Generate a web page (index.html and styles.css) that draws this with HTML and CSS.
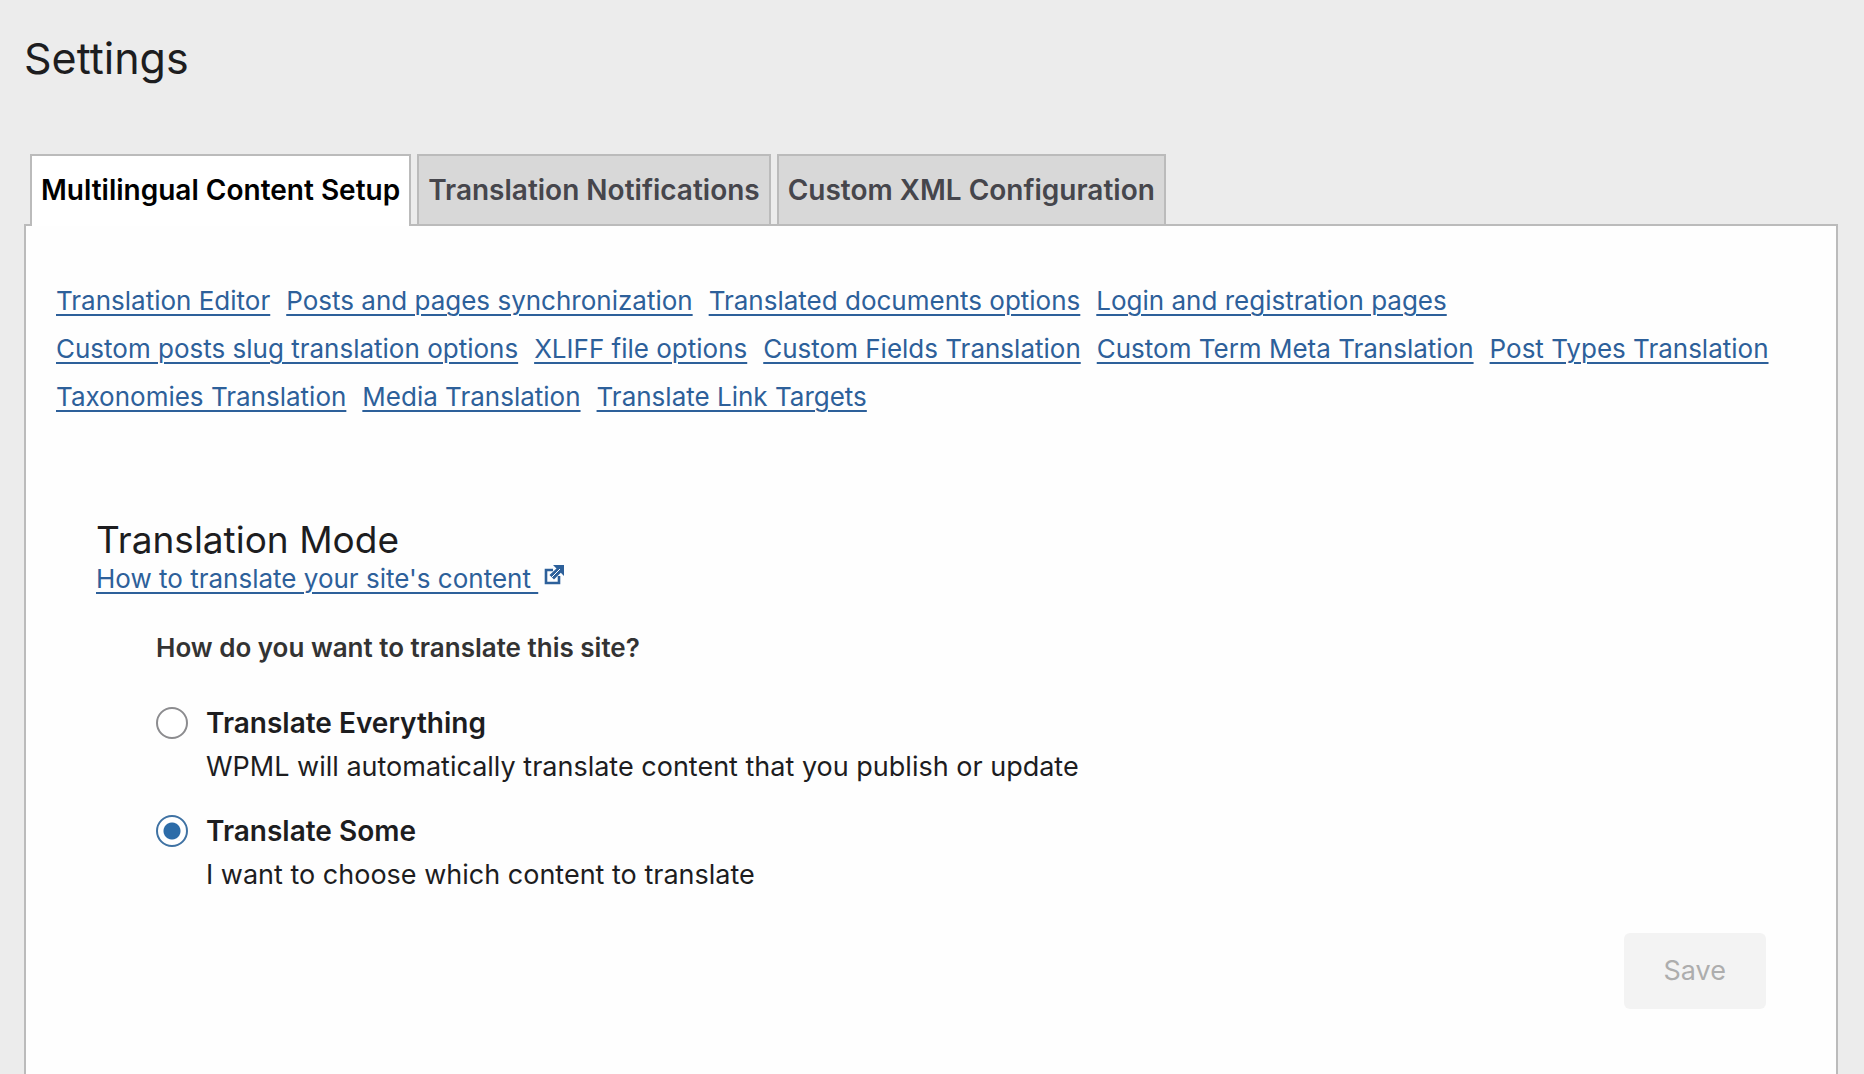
FILE: index.html
```html
<!DOCTYPE html>
<html lang="en">
<head>
    <meta charset="UTF-8">
    <meta name="viewport" content="width=device-width, initial-scale=1.0">
    <title>Settings</title>
    <link rel="stylesheet" href="styles.css">
</head>
<body>
    <h1>Settings</h1>

    <nav class="tabs">
        <a class="tab active" href="#setup">Multilingual Content Setup</a>
        <a class="tab" href="#notifications">Translation Notifications</a>
        <a class="tab" href="#xml-config">Custom XML Configuration</a>
    </nav>

    <main class="panel" id="setup">
        <nav class="section-links">
            <a href="#editor">Translation Editor</a>
            <a href="#sync">Posts and pages synchronization</a>
            <a href="#documents">Translated documents options</a>
            <a href="#login">Login and registration pages</a>
            <a href="#slugs">Custom posts slug translation options</a>
            <a href="#xliff">XLIFF file options</a>
            <a href="#fields">Custom Fields Translation</a>
            <a href="#term-meta">Custom Term Meta Translation</a>
            <a href="#post-types">Post Types Translation</a>
            <a href="#taxonomies">Taxonomies Translation</a>
            <a href="#media">Media Translation</a>
            <a href="#link-targets">Translate Link Targets</a>
        </nav>

        <form class="mode">
            <h2>Translation Mode</h2>
            <a class="help-link" href="#help"><span>How to translate your site's content&nbsp;</span><svg class="external" viewBox="0 0 20 20" aria-hidden="true">
                <path d="M9 5H2v13h13v-7" fill="none" stroke="currentColor" stroke-width="2.6"/>
                <path d="M9 0h11v11l-3.200-3.200L10 14.500 5.500 10l7-6.500z" fill="currentColor"/>
                <path d="M7.500 12.500L16 4" fill="none" stroke="#fff" stroke-width="1"/>
            </svg></a>

            <fieldset class="options">
                <legend>How do you want to translate this site?</legend>

                <div class="option">
                    <input type="radio" name="mode" id="everything">
                    <label for="everything">
                        <strong>Translate Everything</strong>
                        <span>WPML will automatically translate content that you publish or update</span>
                    </label>
                </div>

                <div class="option">
                    <input type="radio" name="mode" id="some" checked>
                    <label for="some">
                        <strong>Translate Some</strong>
                        <span>I want to choose which content to translate</span>
                    </label>
                </div>
            </fieldset>

            <div class="actions">
                <button type="submit" disabled>Save</button>
            </div>
        </form>
    </main>
</body>
</html>
```
FILE: styles.css
```css
* {
    box-sizing: border-box;
}

body {
    display: flex;
    flex-direction: column;
    min-height: 100vh;
    margin: 0;
    padding: 30px 26px 0 24px;
    background: #ececec;
    color: #1d1d1f;
    font-family: Inter, "Liberation Sans", sans-serif;
    font-size: 26px;
    line-height: 48px;
}

h1 {
    margin: 0 0 68px;
    font-size: 43px;
    font-weight: 400;
    line-height: 56px;
}

.tabs {
    display: flex;
    gap: 6px;
    padding-left: 6px;
}

.tab {
    padding: 10px 9px;
    border: 2px solid #bbb;
    border-bottom: none;
    background: #d8d8d8;
    color: #46464c;
    font-size: 28px;
    font-weight: 600;
    text-decoration: none;
}

/* covers the panel's top border */
.tab.active {
    margin-bottom: -2px;
    background: #fff;
    color: #000;
    z-index: 1;
}

.panel {
    flex: 1;
    padding: 51px 70px 62px 30px;
    border: 2px solid #bbb;
    border-bottom: none;
    background: #fefefe;
}

.section-links {
    display: flex;
    flex-wrap: wrap;
    column-gap: 16px;
    margin-right: -30px;
}

.section-links a {
    color: #2d609a;
    text-decoration: underline 2px;
    text-underline-offset: 4px;
}

.mode {
    padding: 97px 0 0 40px;
}

h2 {
    margin: 0;
    font-size: 37px;
    font-weight: 400;
    line-height: 44px;
}

.help-link {
    display: flex;
    align-items: flex-start;
    gap: 6px;
    width: fit-content;
    color: #2d609a;
    line-height: 34px;
    text-decoration: none;
}

.help-link span {
    text-decoration: underline 2px;
    text-underline-offset: 4px;
}

.external {
    width: 20px;
    height: 20px;
    margin-top: 3px;
}

.options {
    margin: 0;
    padding: 28px 0 0 60px;
    border: none;
}

.options legend {
    float: left;
    width: 100%;
    margin-bottom: 29px;
    padding: 0;
    color: #333;
    font-weight: 600;
}

.option {
    display: flex;
    clear: both;
    gap: 18px;
    margin-bottom: 20px;
}

.option input {
    appearance: none;
    flex: none;
    width: 32px;
    height: 32px;
    margin: 6px 0;
    border: 2px solid #8c8c8f;
    border-radius: 50%;
    background: #fff;
}

.option input:checked {
    border-color: #3f72a3;
    background: radial-gradient(circle, #2d6ca8 8px, #fff 9px);
}

.option label {
    font-size: 27px;
    line-height: 44px;
}

.option strong,
.option span {
    display: block;
}

.option strong {
    font-size: 28px;
    font-weight: 600;
}

.actions {
    display: flex;
    justify-content: flex-end;
    margin-top: 16px;
}

button {
    padding: 14px 40px;
    border: none;
    border-radius: 6px;
    background: #f3f3f3;
    color: #adadad;
    font: inherit;
    font-size: 27px;
}
```
